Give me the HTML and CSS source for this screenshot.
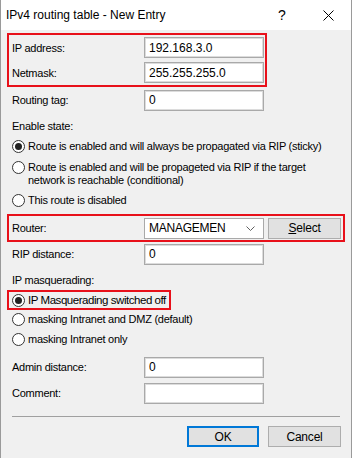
FILE: index.html
```html
<!DOCTYPE html>
<html>

<head>
	<title>IPv4 routing table - New Entry</title>
	<link rel="stylesheet" href="styles.css">
</head>

<body>
	<div class="window">
		<div class="titlebar">
			<span class="title">IPv4 routing table - New Entry</span>
			<span class="tbtn help">?</span>
			<span class="tbtn close">
				<svg width="11" height="11" viewBox="0 0 11 11"><path d="M0.5 0.5L10.5 10.5M10.5 0.5L0.5 10.5" stroke="#000" stroke-width="1" fill="none"/></svg>
			</span>
		</div>
		<div class="content">
			<div class="mark mark-ip">
				<div class="row">
					<label class="label">IP address:</label>
					<input type="text" class="field" value="192.168.3.0">
				</div>
				<div class="row">
					<label class="label">Netmask:</label>
					<input type="text" class="field" value="255.255.255.0">
				</div>
			</div>
			<div class="row plain">
				<label class="label">Routing tag:</label>
				<input type="text" class="field" value="0">
			</div>

			<div class="group-title">Enable state:</div>
			<div class="option first"><span class="radio checked"></span><span>Route is enabled and will always be propagated via RIP (sticky)</span></div>
			<div class="option second"><span class="radio"></span><span>Route is enabled and will be propageted via RIP if the target<br>network is reachable (conditional)</span></div>
			<div class="option"><span class="radio"></span><span>This route is disabled</span></div>

			<div class="mark mark-router">
				<label class="label">Router:</label>
				<div class="combo">
					<span>MANAGEMEN</span>
					<svg width="9" height="5" viewBox="0 0 9 5"><path d="M0.5 0.5L4.5 4.5L8.5 0.5" stroke="#606060" fill="none"/></svg>
				</div>
				<button class="btn select"><u>S</u>elect</button>
			</div>
			<div class="row plain rip">
				<label class="label">RIP distance:</label>
				<input type="text" class="field" value="0">
			</div>

			<div class="group-title masq">IP masquerading:</div>
			<div class="mark mark-masq">
				<div class="option"><span class="radio checked"></span><span>IP Masquerading switched off</span></div>
			</div>
			<div class="option after-mark"><span class="radio"></span><span>masking Intranet and DMZ (default)</span></div>
			<div class="option"><span class="radio"></span><span>masking Intranet only</span></div>

			<div class="row plain admin">
				<label class="label">Admin distance:</label>
				<input type="text" class="field" value="0">
			</div>
			<div class="row plain">
				<label class="label">Comment:</label>
				<input type="text" class="field" value="">
			</div>

			<div class="separator"></div>
			<div class="buttons">
				<button class="btn default">OK</button>
				<button class="btn">Cancel</button>
			</div>
		</div>
	</div>
</body>

</html>
```
FILE: styles.css
```css
* {
	margin: 0px;
	padding: 0px;
	box-sizing: border-box;
}

body {
	background: #f0f0f0;
	font-family: "Liberation Sans", Arial, sans-serif;
	font-size: 11px;
	letter-spacing: -0.25px;
	color: #000;
}

.window {
	width: 352px;
	height: 458px;
	border: 1px solid #9a9a9a;
	border-top: none;
	border-bottom: none;
	background: #f0f0f0;
	overflow: hidden;
}

.titlebar {
	height: 30px;
	background: #fff;
	display: flex;
	align-items: center;
	padding-left: 5px;
	letter-spacing: 0;
}

.title {
	flex: 1;
	font-size: 12px;
}

.tbtn {
	width: 46px;
	height: 30px;
	display: flex;
	align-items: center;
	justify-content: center;
	font-size: 14px;
}

.content {
	padding: 3px 6px 0 6px;
}

.mark {
	border: 2px solid #e8101a;
}

.mark-ip {
	width: 260px;
	padding-left: 3px;
}

.row {
	display: flex;
	align-items: center;
	height: 25px;
}

.row.plain {
	padding-left: 5px;
	height: 26px;
}

.label {
	width: 132px;
}

.field {
	width: 120px;
	height: 21px;
	border: 1px solid #a9a9a9;
	box-shadow: inset 0 0 0 1px #dcdcdc;
	background: #fff;
	font-family: "Liberation Sans", Arial, sans-serif;
	font-size: 12px;
	padding: 0 4px;
	color: #000;
}

.group-title {
	padding-left: 5px;
	margin-top: 4px;
	height: 18px;
	line-height: 18px;
}

.group-title.masq {
	margin-top: 5px;
}

.option {
	display: flex;
	align-items: flex-start;
	padding-left: 5px;
	line-height: 13px;
	margin-top: 7px;
	white-space: nowrap;
}

.option.first {
	margin-top: 5px;
}

.option.second {
	margin-top: 8px;
}

.radio {
	width: 13px;
	height: 13px;
	border: 1px solid #333;
	border-radius: 50%;
	background: #fff;
	margin-right: 3px;
	flex-shrink: 0;
	display: flex;
	align-items: center;
	justify-content: center;
}

.radio.checked::after {
	content: "";
	width: 7px;
	height: 7px;
	border-radius: 50%;
	background: #222;
}

.mark-router {
	margin-top: 7px;
	width: 338px;
	height: 28px;
	display: flex;
	align-items: center;
	padding-left: 3px;
}

.combo {
	width: 120px;
	height: 21px;
	border: 1px solid #a9a9a9;
	background: #fff;
	display: flex;
	align-items: center;
	justify-content: space-between;
	padding: 0 8px 0 4px;
	font-size: 12px;
}

.btn {
	width: 73px;
	height: 21px;
	border: 1px solid #adadad;
	background: #e1e1e1;
	font-family: "Liberation Sans", Arial, sans-serif;
	font-size: 12px;
	letter-spacing: -0.2px;
	color: #000;
}

.select {
	margin-left: 4px;
}

.row.rip {
	height: 24px;
}

.mark-masq {
	width: 164px;
	height: 20px;
	margin-top: 1px;
	display: flex;
	align-items: center;
	font-size: 11.5px;
	letter-spacing: -0.45px;
}

.mark-masq .option {
	margin-top: 0;
	padding-left: 3px;
}

.option.after-mark {
	margin-top: 3px;
}

.admin {
	margin-top: 8px;
}

.separator {
	margin: 10px 5px 0 5px;
	border-top: 1px solid #a0a0a0;
}

.buttons {
	display: flex;
	justify-content: flex-end;
	gap: 9px;
	margin-top: 9px;
	padding-right: 4px;
}

.btn.default {
	width: 72px;
	border: 2px solid #0078d7;
}
```
